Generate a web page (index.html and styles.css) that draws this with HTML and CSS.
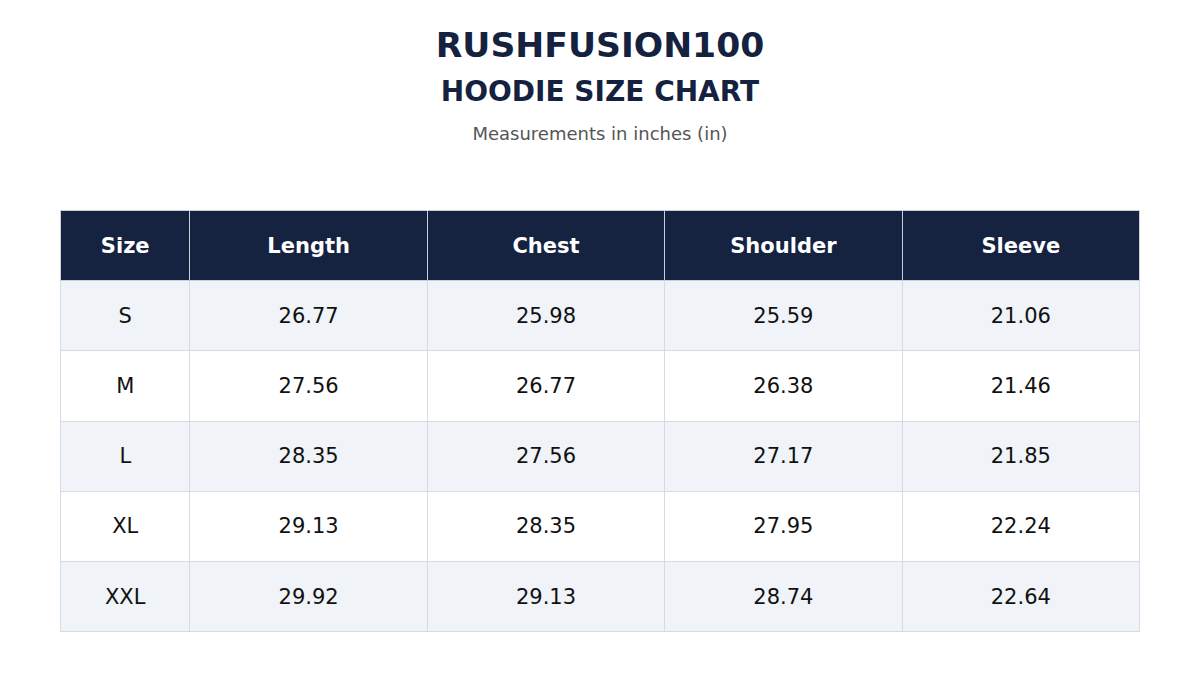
FILE: index.html
```html
<!DOCTYPE html>
<html>
<head>
<meta charset="utf-8">
<link rel="stylesheet" href="styles.css">
</head>
<body>
<div class="page">
  <header class="head">
    <h1 class="brand">RUSHFUSION100</h1>
    <h2 class="title">HOODIE SIZE CHART</h2>
    <p class="sub">Measurements in inches (in)</p>
  </header>
  <table class="chart">
    <colgroup>
      <col class="c-size"><col class="c-val"><col class="c-val"><col class="c-val"><col class="c-val">
    </colgroup>
    <thead>
      <tr><th>Size</th><th>Length</th><th>Chest</th><th>Shoulder</th><th>Sleeve</th></tr>
    </thead>
    <tbody>
      <tr><td>S</td><td>26.77</td><td>25.98</td><td>25.59</td><td>21.06</td></tr>
      <tr><td>M</td><td>27.56</td><td>26.77</td><td>26.38</td><td>21.46</td></tr>
      <tr><td>L</td><td>28.35</td><td>27.56</td><td>27.17</td><td>21.85</td></tr>
      <tr><td>XL</td><td>29.13</td><td>28.35</td><td>27.95</td><td>22.24</td></tr>
      <tr><td>XXL</td><td>29.92</td><td>29.13</td><td>28.74</td><td>22.64</td></tr>
    </tbody>
  </table>
</div>
</body>
</html>
```
FILE: styles.css
```css
* { box-sizing: border-box; }
html, body { margin: 0; padding: 0; background: #ffffff; }
body { font-family: "DejaVu Sans", "Liberation Sans", sans-serif; }
.page { padding: 24px 60px 0; }
.head { text-align: center; }
.brand { margin: 0; font-size: 34.6px; line-height: 42px; font-weight: bold; color: #15223f; }
.title { margin: 8px 0 0; font-size: 28px; line-height: 36px; font-weight: bold; color: #15223f; }
.sub { margin: 13px 0 0; font-size: 18px; line-height: 22px; color: #555555; }
.chart { margin-top: 65px; width: 1080px; border-collapse: collapse; table-layout: fixed; }
.c-size { width: 12%; }
.c-val { width: 22%; }
.chart th, .chart td { border: 1px solid #d5dae3; text-align: center; height: 70.2px; padding: 0; font-size: 21px; }
.chart th { background: #152240; color: #ffffff; font-weight: bold; border-color: #c9ced8; }
.chart td { color: #111111; }
.chart tbody tr:nth-child(odd) td { background: #f0f3f8; }
```
